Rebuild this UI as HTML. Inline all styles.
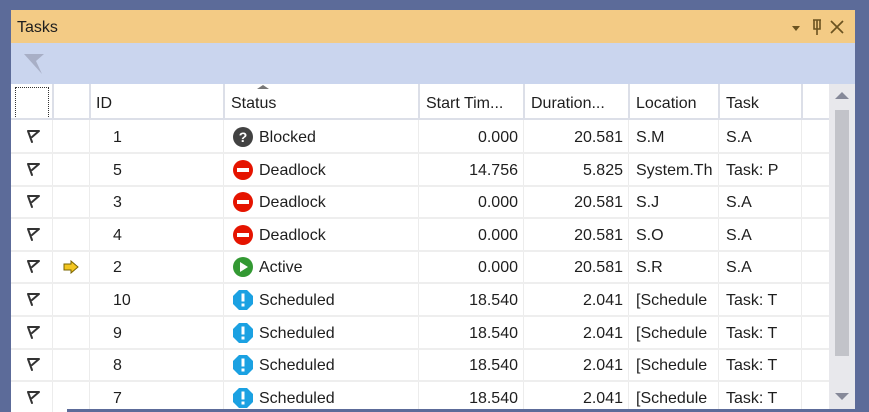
<!DOCTYPE html>
<html><head><meta charset="utf-8"><style>
*{margin:0;padding:0;box-sizing:border-box}
body{width:869px;height:412px;background:#5c6b99;position:relative;overflow:hidden;font-family:"Liberation Sans",sans-serif;font-size:16px;color:#1e1e1e}
.abs{position:absolute}
#title{left:11px;top:10px;width:844px;height:33px;background:#f3cb85}
#tool{left:11px;top:43px;width:844px;height:41px;background:#cad5ee}
#grid{left:11px;top:84px;width:818px;height:328px;background:#fff;overflow:hidden}
.vl{position:absolute;top:0;width:1px;height:325px;background:#ececec}
.hvl{position:absolute;top:0;width:2px;height:36px;background:#dcdfe8}
.hl{position:absolute;left:0;width:818px;height:2px;background:#eeeeee}
.t{position:absolute;white-space:nowrap;line-height:20px}
.r{text-align:right}
</style></head><body>
<div id="title" class="abs">
 <div class="t" style="left:6px;top:8px">Tasks</div>
 <svg class="abs" style="left:770px;top:7px" width="74" height="22">
  <path d="M11,9 L19,9 L15,14 Z" fill="#6b5320"/>
  <path d="M32,3 h8 M36,3 v15 M33,3 v9 h6 v-9" stroke="#6b5320" stroke-width="1.6" fill="none"/>
  <path d="M50,4 L62,16 M62,4 L50,16" stroke="#6b5320" stroke-width="1.7"/>
 </svg>
</div>
<div id="tool" class="abs">
 <svg class="abs" style="left:12px;top:10px" width="24" height="24"><path d="M1,1 L21,1 L13,8 L19,21 Z" fill="#a8afc6"/></svg>
</div>
<div id="grid" class="abs">
 <div class="abs" style="left:0;top:0;width:818px;height:36px;background:#fff"></div>
 <div class="abs" style="left:4px;top:3px;width:34px;height:32px;border:1px dotted #333"></div>
 <div class="hvl" style="left:41px"></div><div class="hvl" style="left:78px"></div><div class="hvl" style="left:212px"></div><div class="hvl" style="left:407px"></div><div class="hvl" style="left:512px"></div><div class="hvl" style="left:617px"></div><div class="hvl" style="left:707px"></div><div class="hvl" style="left:790px"></div>
 <div class="abs" style="left:0;top:34px;width:818px;height:2px;background:#dcdfe8"></div>
 <svg class="abs" style="left:246px;top:0" width="12" height="6"><path d="M0,5 L6,1 L12,5Z" fill="#777"/></svg>
 <div class="t" style="left:85px;top:10px">ID</div>
 <div class="t" style="left:220px;top:10px">Status</div>
 <div class="t" style="left:415px;top:10px">Start Tim...</div>
 <div class="t" style="left:520px;top:10px">Duration...</div>
 <div class="t" style="left:625px;top:10px">Location</div>
 <div class="t" style="left:715px;top:10px">Task</div>
 <div id="rows"></div>
</div>
<div class="abs" style="left:829px;top:84px;width:26px;height:328px;background:#e8e8ec"></div>
<svg class="abs" style="left:835px;top:92px" width="14" height="8"><path d="M0,7 L7,0 L14,7Z" fill="#868999"/></svg>
<div class="abs" style="left:835px;top:110px;width:14px;height:246px;background:#c2c3c9"></div>
<svg class="abs" style="left:835px;top:393px" width="14" height="8"><path d="M0,0 L7,7 L14,0Z" fill="#868999"/></svg>
<div class="abs" style="left:67px;top:409px;width:788px;height:3px;background:#5c6b99"></div>
<script>
var d=[["1","q","Blocked","0.000","20.581","S.M","S.A"],["5","d","Deadlock","14.756","5.825","System.Th","Task: P"],["3","d","Deadlock","0.000","20.581","S.J","S.A"],["4","d","Deadlock","0.000","20.581","S.O","S.A"],["2","a","Active","0.000","20.581","S.R","S.A"],["10","s","Scheduled","18.540","2.041","[Schedule","Task: T"],["9","s","Scheduled","18.540","2.041","[Schedule","Task: T"],["8","s","Scheduled","18.540","2.041","[Schedule","Task: T"],["7","s","Scheduled","18.540","2.041","[Schedule","Task: T"]];
var ic={q:'<circle cx="10" cy="10" r="10" fill="#424242"/><text x="10" y="15" font-size="14" font-weight="bold" fill="#fff" text-anchor="middle" font-family="Liberation Sans">?</text>',
d:'<circle cx="10" cy="10" r="10" fill="#e51400"/><rect x="4" y="8" width="12" height="4" fill="#fff"/>',
a:'<circle cx="10" cy="10" r="10" fill="#339933"/><path d="M7,5 L15,10 L7,15Z" fill="#fff"/>',
s:'<path d="M6,0 H14 L20,6 V14 L14,20 H6 L0,14 V6Z" fill="#1ba1e2"/><rect x="8.5" y="3.5" width="3" height="8" fill="#fff"/><rect x="8.5" y="13.5" width="3" height="3" fill="#fff"/>'};
var h='';[41,78,212,407,512,617,707,790].forEach(function(x){h+='<div class="vl" style="left:'+x+'px;top:36px"></div>'});
d.forEach(function(r,i){var y=37+i*32.6;
h+='<div class="hl" style="top:'+(y+31)+'px"></div>';
h+='<svg class="abs" style="left:14px;top:'+(y+8)+'px" width="16" height="16"><path d="M3,2 H14 L7,8 M3,2 L7,13" stroke="#333" stroke-width="2" fill="none" stroke-linejoin="round" stroke-linecap="round"/></svg>';
if(r[1]=='a')h+='<svg class="abs" style="left:52px;top:'+(y+9)+'px" width="16" height="14"><path d="M1,4 H8 V1 L15,7 L8,13 V10 H1Z" fill="#f3c621" stroke="#7a6400" stroke-width="1"/></svg>';
h+='<div class="t" style="left:102px;top:'+(y+7)+'px">'+r[0]+'</div>';
h+='<svg class="abs" style="left:222px;top:'+(y+6)+'px" width="20" height="20">'+ic[r[1]]+'</svg>';
h+='<div class="t" style="left:248px;top:'+(y+7)+'px">'+r[2]+'</div>';
h+='<div class="t r" style="left:410px;width:97px;top:'+(y+7)+'px">'+r[3]+'</div>';
h+='<div class="t r" style="left:515px;width:97px;top:'+(y+7)+'px">'+r[4]+'</div>';
h+='<div class="t" style="left:625px;width:80px;overflow:hidden;top:'+(y+7)+'px">'+r[5]+'</div>';
h+='<div class="t" style="left:715px;top:'+(y+7)+'px">'+r[6]+'</div>';});
document.getElementById('rows').innerHTML=h;
</script>
</body></html>
